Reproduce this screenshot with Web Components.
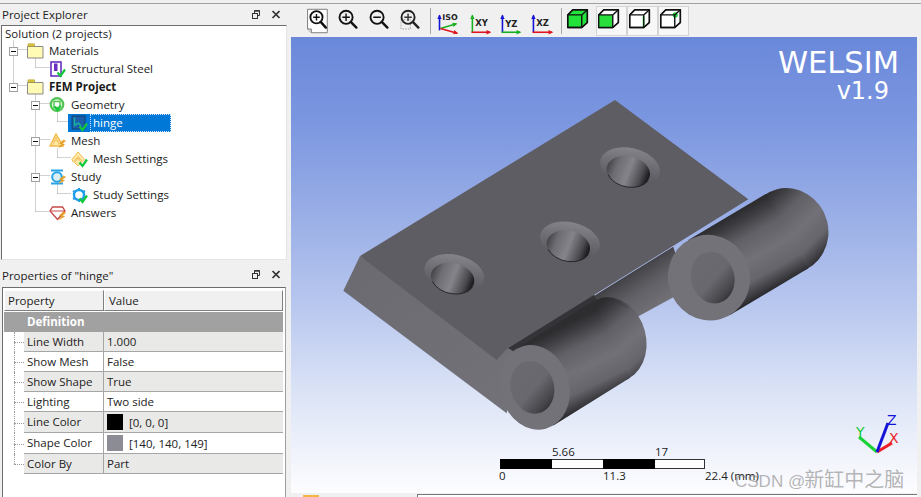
<!DOCTYPE html>
<html><head><meta charset="utf-8"><title>WELSIM</title>
<style>html,body{margin:0;padding:0;background:#f0f0f0;overflow:hidden}body{width:921px;height:497px;font:11.5px "Open Sans",sans-serif;color:#1a1a1a}</style>
</head><body>
<wel-app>
  <div slot="left" style="display:contents">
    <dock-panel title="Project Explorer" tall="1">
      <tree-view>
        <tree-row level="0" label="Solution (2 projects)"></tree-row>
        <tree-row level="1" exp="1" icon="folder" label="Materials"></tree-row>
        <tree-row level="2" icon="steel" label="Structural Steel"></tree-row>
        <tree-row level="1" exp="1" icon="folder" label="FEM Project" bold="1"></tree-row>
        <tree-row level="2" exp="1" icon="geometry" label="Geometry"></tree-row>
        <tree-row level="3" icon="hinge" label="hinge" selected="1"></tree-row>
        <tree-row level="2" exp="1" icon="mesh" label="Mesh"></tree-row>
        <tree-row level="3" icon="meshset" label="Mesh Settings"></tree-row>
        <tree-row level="2" exp="1" icon="study" label="Study"></tree-row>
        <tree-row level="3" icon="studyset" label="Study Settings"></tree-row>
        <tree-row level="2" icon="answers" label="Answers"></tree-row>
      </tree-view>
    </dock-panel>
    <dock-panel title="Properties of &quot;hinge&quot;">
      <prop-table>
        <prop-row name="Line Width" value="1.000" alt="1" h="20"></prop-row>
        <prop-row name="Show Mesh" value="False" h="20"></prop-row>
        <prop-row name="Show Shape" value="True" alt="1" h="20"></prop-row>
        <prop-row name="Lighting" value="Two side" h="20"></prop-row>
        <prop-row name="Line Color" value="[0, 0, 0]" swatch="#000" alt="1" h="21"></prop-row>
        <prop-row name="Shape Color" value="[140, 140, 149]" swatch="#8c8c95" h="21"></prop-row>
        <prop-row name="Color By" value="Part" alt="1" h="20" last="1"></prop-row>
      </prop-table>
    </dock-panel>
  </div>
  <div slot="right" style="display:contents">
    <tool-bar>
      <tool-btn icon="fit"></tool-btn><tool-btn icon="zin"></tool-btn><tool-btn icon="zout"></tool-btn><tool-btn icon="zwin"></tool-btn>
      <tool-sep></tool-sep>
      <tool-btn icon="iso"></tool-btn><tool-btn icon="xy"></tool-btn><tool-btn icon="yz"></tool-btn><tool-btn icon="xz"></tool-btn>
      <tool-sep></tool-sep>
      <tool-btn icon="solid"></tool-btn><tool-btn icon="face" on="1"></tool-btn><tool-btn icon="edge" on="1"></tool-btn><tool-btn icon="vertex" on="1"></tool-btn>
    </tool-bar>
    <view-port>
      <hinge-model></hinge-model>
      <brand-mark></brand-mark>
      <scale-bar></scale-bar>
      <axis-triad></axis-triad>
      <water-mark></water-mark>
    </view-port>
    <tab-strip></tab-strip>
  </div>
</wel-app>
<script>
const def=(name,render)=>customElements.define(name,class extends HTMLElement{
  connectedCallback(){ if(this.shadowRoot) return; const r=this.attachShadow({mode:'open'}); r.innerHTML=render(this); }
});
const A=(e,n)=>e.getAttribute(n)||'';

def('wel-app',()=>`<style>
:host{display:grid;grid-template-columns:291px 626px 4px;width:921px;height:497px;box-sizing:border-box;padding-top:3px;overflow:hidden}
.l,.r{display:flex;flex-direction:column;border-top:1px solid #a0a0a0;height:493px;min-height:0}
.e{border-top:1px solid #a0a0a0}
</style><div class="l"><slot name="left"></slot></div><div class="r"><slot name="right"></slot></div><div class="e"></div>`);

def('dock-panel',e=>{const tall=A(e,'tall');return `<style>
:host{display:flex;flex-direction:column;flex:${tall?'0 0 256px':'1 1 0'};min-height:0}
.t{display:flex;align-items:center;height:${tall?21:27}px;padding:${tall?'0':'3px 0 0'};box-sizing:border-box;padding-left:2px;color:#222}
.t span{flex:1}
svg{display:block;margin-right:11px}
.b{position:relative;flex:1;margin-left:${tall?1:2}px;margin-right:${tall?4:5}px;background:#fff;border:1px solid #e4e4e4;border-left:1px solid #6d6d6d;border-top:1px solid #6d6d6d;min-height:0;${tall?'':'border-right:1px solid #a0a0a0;border-bottom:0;'}}
</style><div class="t"><span>${A(e,'title').replace(/"/g,'&quot;')}</span>
<svg width="30" height="12" viewBox="0 0 30 12"><g fill="none" stroke="#333"><rect x="2.5" y="4.5" width="5" height="5"/><path d="M4.5 4V1.5h5v5H8"/><path d="M4.5 2h5" stroke-width="1.4"/></g><path d="M22.5 2l7 7M29.5 2l-7 7" stroke="#333" stroke-width="1.7"/></svg></div>
<div class="b"><slot></slot></div>`});

def('tree-view',()=>{
 const o=(x,y)=>[x-2,y-26];
 const L=(a,b,c,d)=>{const p=o(a,b),q=o(c,d);return `M${p[0]+.5} ${p[1]+.5}L${q[0]+.5} ${q[1]+.5}`};
 const d=[L(13,42,13,87),L(18,51,27,51),L(18,87,27,87),L(35,60,35,69),L(35,69,50,69),L(35,96,35,213),L(40,105,49,105),L(40,141,49,141),L(40,177,49,177),L(35,213,49,213),L(57,114,57,123),L(57,123,68,123),L(57,150,57,159),L(57,159,70,159),L(57,186,57,195),L(57,195,70,195)].join('');
 return `<style>:host{display:block;position:relative;height:100%}
svg{position:absolute;left:0;top:0;pointer-events:none}
.c{position:relative;margin-top:-2px}</style>
<svg width="280" height="230"><path d="${d}" fill="none" stroke="#a3a3a3" stroke-dasharray="1 1"/></svg><div class="c"><slot></slot></div>`});

const chk=`<path d="M8.500 11.500l3 3.500 4.500-6.500" fill="none" stroke="#12c83a" stroke-width="2.200"/>`;
const bolt=`<path d="M14.500 7l-4 3.500 2.500.5-3 3.500 5.500-3-2.500-.8 3.500-2.700z" fill="#eda52a" stroke="#d98f10" stroke-width=".5"/>`;
const icons={
 folder:`<path d="M.5 3.500h15.500v11.500H.5z" fill="#fffbb4" stroke="#8a8a8a"/><path d="M1 .8h6.500v2.400H1z" fill="#e0c93c" stroke="#a99b2b" stroke-width=".6"/>`,
 steel:`<rect x="2" y="1" width="10" height="14" fill="#fff" stroke="#6a2fc4" stroke-width="1.600"/><rect x="5" y="2.500" width="3.500" height="7.500" fill="#6a2fc4"/>${chk}`,
 geometry:`<circle cx="8" cy="7.500" r="6.300" fill="#dff5df" stroke="#52c452" stroke-width="2.200"/><rect x="5" y="4.500" width="6" height="6" fill="#fff" stroke="#52c452" stroke-width="1.400"/><path d="M5.500 9.500l3 3.500 3-4.500" fill="none" stroke="#12c83a" stroke-width="2"/>`,
 hinge:`<rect x="1" y="1" width="13" height="13" fill="#1c5ea8" stroke="#12406f"/><path d="M3.500 2.500v8l4-2.500 2.500 3" fill="none" stroke="#1ab0a0" stroke-width="1.500"/>${chk}`,
 mesh:`<path d="M7 1L14 13H1z" fill="#fde9a8" stroke="#f1b94c" stroke-width="1.400"/><path d="M4.500 8h6M7 4l-3 8M7 4l3 8" stroke="#f1b94c" fill="none" stroke-width=".8"/>${bolt}`,
 meshset:`<path d="M7 1l6.500 7.500L11.500 11 7 5.500 2.500 11 .8 8.500z" fill="#fde9a8" stroke="#f1b94c" stroke-width="1"/><path d="M7 7l3.500 4.500L7 15 3.500 11.500z" fill="#fde9a8" stroke="#f1b94c" stroke-width="1"/>${chk}`,
 study:`<path d="M2 1.500h12M2 14.500h12" stroke="#2aa4e8" stroke-width="1.800"/><circle cx="8" cy="8" r="4.800" fill="#d9f0fb" stroke="#2aa4e8" stroke-width="2"/>${bolt}`,
 studyset:`<circle cx="8" cy="8" r="5" fill="#fff" stroke="#1f9de6" stroke-width="2.400"/><path d="M8 1v2M8 13v2M2 4l2 1M14 4l-2 1M2 12l2-1M14 12l-2-1" stroke="#1f9de6" stroke-width="2"/>${chk}`,
 answers:`<path d="M3.500 2h10L16 6l-7.500 8.500L1 6z" fill="#fff" stroke="#c9484a" stroke-width="1.400"/><path d="M1.500 6h14" stroke="#c9484a"/>${bolt}`
};
def('tree-row',e=>{
 const lv=+A(e,'level'),sel=A(e,'selected'),bold=A(e,'bold'),label=A(e,'label');
 if(lv===0) return `<style>:host{display:block;height:18px;line-height:20px;padding-left:3px;white-space:nowrap}</style>${label}`;
 const ic=`<svg class="i" width="17" height="17" viewBox="0 0 17 17">${icons[A(e,'icon')]}</svg>`;
 const body=sel?`<span class="sel">${ic}<span class="x">${label}</span></span>`:`${ic}<span class="x">${label}</span>`;
 return `<style>
 :host{display:flex;align-items:center;height:18px;padding-left:${(lv-1)*22+7}px;white-space:nowrap;position:relative}
 .e{flex:0 0 9px;width:9px;height:9px;box-sizing:border-box;border:1px solid #a0a0a0;margin-right:9px;position:relative;background:#fff;visibility:${A(e,'exp')?'visible':'hidden'}}
 .e::after{content:"";position:absolute;left:1px;top:3px;width:5px;height:1px;background:#111}
 .i{flex:0 0 17px;display:block;margin-right:5px}
 .x{font-weight:${bold?700:400};line-height:18px;height:18px}
 .sel{display:flex;align-items:center;width:103px;height:18px;box-sizing:border-box;margin-left:-3px;padding-left:3px;background:#0078d7;color:#fff}
 .sel .i{margin-right:2px}
 .sel .x{flex:1;box-sizing:border-box;line-height:16px;border:1px dotted #cfe6fa;padding-left:2px}
 </style><span class="e"></span>${body}`});

def('prop-table',()=>`<style>
:host{display:block;padding:2px 0 0 1px;width:279px;color:#222}
.h{display:grid;grid-template-columns:100px 179px;height:20px}
.h div{background:#f0f0f0;box-sizing:border-box;border:1px solid;border-color:#fff #7f7f7f #7f7f7f #fff;line-height:19px;padding-left:3px}
.h div+div{padding-left:4px}
.d{margin-top:2px;height:20px;background:#a1a1a1;color:#fff;font-weight:700;line-height:20px;padding-left:23px}
</style><div class="h"><div>Property</div><div>Value</div></div><div class="d">Definition</div><slot></slot>`);

def('prop-row',e=>{const h=+A(e,'h'),sw=A(e,'swatch');return `<style>
:host{display:flex;height:${h}px;white-space:nowrap}
.g{flex:0 0 20px;position:relative}
.g::before{content:"";position:absolute;left:10px;top:0;${A(e,'last')?'height:50%':'bottom:0'};border-left:1px dotted #999}
.g::after{content:"";position:absolute;left:10px;right:0;top:50%;border-top:1px dotted #999}
.n,.v{box-sizing:border-box;border-bottom:1px solid #a6a6a6;background:${A(e,'alt')?'#e9e9e7':'#fff'}}
.n{flex:0 0 80px;padding-left:3px;border-right:1px solid #a6a6a6;line-height:${h-1}px}
.v{flex:0 0 179px;padding-left:3px;display:flex;align-items:center}
.s{width:16px;height:16px;background:${sw};margin-right:6px}
</style><div class="g"></div><div class="n">${A(e,'name')}</div><div class="v">${sw?'<span class="s"></span>':''}${A(e,'value')}</div>`});

def('tool-bar',()=>`<style>:host{display:flex;align-items:center;height:33px;flex:none;padding-left:12px;background:#f0f0f0;box-sizing:border-box}</style>
<slot></slot>`);
def('tool-sep',()=>`<style>:host{display:block;flex:0 0 1px;height:26px;background:#a8a8a8;margin:0 3px 0 3px}</style>`);
const mag=(extra,c='#111')=>`<circle cx="13" cy="12" r="7" fill="none" stroke="${c}" stroke-width="2"/><path d="M18 17l6 6" stroke="${c}" stroke-width="2.600" stroke-linecap="round"/>${extra}`;
const ar=(x1,y1,x2,y2,c)=>{const a=Math.atan2(y2-y1,x2-x1),s=4.500,f=(t)=>`${x2+s*Math.cos(a+t)} ${y2+s*Math.sin(a+t)}`;return `<path d="M${x1} ${y1}L${x2} ${y2}" stroke="${c}" stroke-width="1.700"/><path d="M${x2+Math.cos(a)} ${y2+Math.sin(a)}L${f(2.6)}L${f(-2.6)}z" fill="${c}"/>`};
const lbl=(t,x,y,s=9)=>`<text x="${x}" y="${y}" font-family="DejaVu Sans" font-weight="700" font-size="${s}" fill="#222">${t}</text>`;
const R='#e01520',G='#18b020',B='#1414d8';
const cube=(extra,front='none')=>`<path d="M3 9.500L8.500 4H24v13.500L18 23H3z" fill="#fff" stroke="#111" stroke-width="1.500" stroke-linejoin="round"/>${front!=='none'?`<rect x="3" y="9.500" width="15" height="13.500" fill="${front}"/>`:''}${extra}<path d="M3 9.500h15V23M18 9.500L24 4" fill="none" stroke="#111" stroke-width="1.500"/><path d="M3 9.500L8.500 4H24v13.500L18 23H3z" fill="none" stroke="#111" stroke-width="1.500" stroke-linejoin="round"/>`;
const tool={
 fit:`<path d="M5 3.500h21v25h-17l-4-4z" fill="#fff" stroke="#777"/><path d="M5 24.500h4v4" fill="#ddd" stroke="#777"/><circle cx="14.500" cy="12" r="6.500" fill="none" stroke="#111" stroke-width="2"/><path d="M19 17l5.500 6" stroke="#111" stroke-width="2.600" stroke-linecap="round"/><path d="M14.500 8.500v7M11 12h7" stroke="#111" stroke-width="1.500"/>`,
 zin:mag(`<path d="M13 8v8M9 12h8" stroke="#111" stroke-width="1.500"/>`),
 zout:mag(`<path d="M9 12h8" stroke="#111" stroke-width="1.600"/>`),
 zwin:`<rect x="5.500" y="14.500" width="10" height="10" fill="none" stroke="#999" stroke-dasharray="1.500 1.500"/>`+mag(`<path d="M13 8v8M9 12h8" stroke="#333" stroke-width="1.500"/>`,'#222'),
 iso:ar(6,26,6,10,B)+ar(7,24,24,19,G)+ar(7,24,25,29,R)+lbl('ISO',9,15,8.500),
 xy:ar(8,28,8,10,G)+ar(7,28,27,28,R)+lbl('XY',11,21),
 yz:ar(7,28,7,10,B)+ar(6,28,26,28,G)+lbl('YZ',10,22),
 xz:ar(7,28,7,10,B)+ar(6,28,27,28,R)+lbl('XZ',10,21),
 solid:cube('').replace(/fill="#fff"/,'fill="#22e33a"'),
 face:cube('','#28dd3c'),
 edge:cube(`<path d="M16.800 11v12h2V11z" fill="#48e060"/>`),
 vertex:cube(`<circle cx="18.500" cy="9.500" r="2.800" fill="#22d840"/>`)
};
def('tool-btn',e=>`<style>:host{flex:0 0 31px;width:31px;height:30px;display:flex;align-items:center;justify-content:center;box-sizing:border-box;${A(e,'on')?'background:#f7f7f7;border:1px solid #d4d4d4;':''}}svg{display:block;margin-right:5px;flex:none}</style>
<svg width="28" height="30" viewBox="0 0 28 32">${tool[A(e,'icon')]}</svg>`);

def('view-port',()=>`<style>:host{display:block;position:relative;flex:none;height:456px;overflow:hidden;background:linear-gradient(#6a88da 0%,#7b96e0 18%,#98ade6 38%,#b7c6ee 58%,#dbe3f6 78%,#fdfdff 100%)}</style><slot></slot>`);

def('hinge-model',()=>{
 const rad=Math.PI/180;
 const pt=(cx,cy,rx,ry,th,t)=>{const x=rx*Math.cos(t),y=ry*Math.sin(t),c=Math.cos(th*rad),s=Math.sin(th*rad);return [cx+x*c-y*s,cy+x*s+y*c]};
 const hole=(cx,cy)=>{
  const a=pt(-5,15,66,46,13,150*rad),b=pt(-5,15,66,46,13,15*rad);
  return `<g transform="translate(${cx} ${cy})"><ellipse rx="91" ry="56" transform="rotate(13)" fill="url(#cone)"/><ellipse cx="-5" cy="15" rx="66" ry="46" transform="rotate(13 -5 15)" fill="url(#bore)"/><path d="M${a[0]} ${a[1]}A66 46 13 0 0 ${b[0]} ${b[1]}" fill="none" stroke="#1a1a1d" stroke-width="2.500"/></g>`};
 const tube=(id,nx,ny,fx,fy,rx,ry,hx,hy,hrx,hry)=>{
  const th=-15,dx=fx-nx,dy=fy-ny,c=Math.cos(-th*rad),s=Math.sin(-th*rad);
  const lx=dx*c-dy*s,ly=dx*s+dy*c;
  const t0=Math.atan2(-ry*lx,rx*ly);
  let p=pt(nx,ny,rx,ry,th,t0),q=pt(nx,ny,rx,ry,th,t0+Math.PI);
  if(p[1]>q[1]){const w=p;p=q;q=w}
  return `<linearGradient id="${id}" gradientUnits="userSpaceOnUse" x1="${p[0]}" y1="${p[1]}" x2="${q[0]}" y2="${q[1]}"><stop offset="0" stop-color="#2d2d30"/><stop offset=".1" stop-color="#3c3c40"/><stop offset=".3" stop-color="#616066"/><stop offset=".55" stop-color="#727177"/><stop offset=".78" stop-color="#66656b"/><stop offset=".93" stop-color="#3c3b40"/><stop offset="1" stop-color="#252528"/></linearGradient>
  <ellipse cx="${fx}" cy="${fy}" rx="${rx}" ry="${ry}" transform="rotate(${th} ${fx} ${fy})" fill="url(#${id})"/>
  <path d="M${p[0]} ${p[1]}L${p[0]+dx} ${p[1]+dy}L${q[0]+dx} ${q[1]+dy}L${q[0]} ${q[1]}z" fill="url(#${id})"/>
  <ellipse cx="${nx}" cy="${ny}" rx="${rx}" ry="${ry}" transform="rotate(${th} ${nx} ${ny})" fill="#737279"/>
  <ellipse cx="${hx}" cy="${hy}" rx="${hrx}" ry="${hry}" transform="rotate(${th} ${hx} ${hy})" fill="url(#tubehole)"/>`};
 return `<style>:host{position:absolute;left:49px;top:63px;display:block;width:500px;height:350px}svg{display:block}</style>
<svg width="500" height="350" viewBox="0 0 1500 1050">
<defs>
<linearGradient id="cone" x1="0" y1="0" x2=".15" y2="1"><stop offset="0" stop-color="#88878d"/><stop offset=".5" stop-color="#6e6d73"/><stop offset="1" stop-color="#58575d"/></linearGradient>
<linearGradient id="bore" x1="0" y1="0" x2="1" y2=".1"><stop offset="0" stop-color="#3a3a3e"/><stop offset=".25" stop-color="#6d6c72"/><stop offset=".55" stop-color="#85848a"/><stop offset=".85" stop-color="#4c4b50"/><stop offset="1" stop-color="#1f1f22"/></linearGradient>
<linearGradient id="tubehole" x1=".2" y1="0" x2=".75" y2="1"><stop offset="0" stop-color="#6b6a70"/><stop offset=".55" stop-color="#69686e"/><stop offset=".85" stop-color="#47464b"/><stop offset="1" stop-color="#2c2c30"/></linearGradient>
<linearGradient id="mid" gradientUnits="userSpaceOnUse" x1="840" y1="540" x2="920" y2="660"><stop offset="0" stop-color="#434347"/><stop offset=".45" stop-color="#626167"/><stop offset="1" stop-color="#757479"/></linearGradient>
<linearGradient id="front" x1="0" y1="0" x2="1" y2="1"><stop offset="0" stop-color="#6b6a70"/><stop offset="1" stop-color="#737278"/></linearGradient>
</defs>
<path d="M690 632L1000 440L1040 570L890 652z" fill="url(#mid)"/>
<path d="M490 745L760 580L800 660L540 810z" fill="#343438"/>
<path d="M60 468L10 572L500 940L530 760z" fill="url(#front)"/>
<path d="M825 0L1225 298L500 747L470 780L60 468z" fill="#5e5d63"/>
${hole(870,200)}${hole(690,423)}${hole(343,520)}
${tube('t1',584,862,814,719,104,128.500,577,862,65,80)}
${tube('t2',1107,533,1342,393,123,129,1118,533,65,78)}
<path d="M770 592Q815 590 860 622" fill="none" stroke="#333" stroke-dasharray="3 2" stroke-width="1.500"/>
</svg>`});

def('brand-mark',()=>`<style>:host{position:absolute;right:18px;top:9px;display:flex;flex-direction:column;align-items:flex-end;color:#fff;font-family:"DejaVu Sans",sans-serif;line-height:1}
.a{font-size:30.500px;line-height:33px}.b{font-size:24px;line-height:25px;margin-right:10px}</style><div class="a">WELSIM</div><div class="b">v1.9</div>`);

def('scale-bar',()=>`<style>:host{position:absolute;left:209px;top:407px;display:grid;grid-template-columns:52px 51px 52px 50px auto;grid-template-rows:15px 10px 16px;line-height:15px;white-space:nowrap;color:#222}
.b{border:1px solid #333;border-width:1px 0;background:#fff}.k{background:#000;border-color:#000}.e{border-right:1px solid #333}
.s{grid-row:3;line-height:14px}
</style>
<span></span><span>5.66</span><span></span><span>17</span><span></span>
<div class="b k"></div><div class="b"></div><div class="b k"></div><div class="b e"></div><span></span>
<span class="s" style="margin-left:-1px">0</span><span class="s"></span><span class="s">11.3</span><span class="s"></span><span class="s">22.4 (mm)</span>`);

def('axis-triad',()=>`<style>:host{position:absolute;left:560px;top:380px;display:block;width:50px;height:50px}svg{display:block;overflow:visible}text{font:14px "DejaVu Sans",sans-serif}</style>
<svg width="50" height="50"><path d="M26 35L8 20" stroke="#18d238" stroke-width="3"/><path d="M26 35L41 26" stroke="#ee1c24" stroke-width="3"/><path d="M26 35L37 6" stroke="#1414d8" stroke-width="3"/>
<text x="5" y="20" fill="#18c838">Y</text><text x="36" y="8" fill="#1414d8">Z</text><text x="38" y="26" fill="#ee1c24">X</text></svg>`);

def('water-mark',()=>`<style>:host{position:absolute;left:444px;top:427px;display:block;font:17px "Liberation Sans","Noto Sans CJK SC",sans-serif;color:rgba(120,120,120,.55);white-space:nowrap}span{font-size:20px;margin-left:-1px}</style>CSDN @<span>新缸中之脑</span>`);

def('tab-strip',()=>`<style>:host{display:flex;flex:none;height:4px;background:#f0f0f0;overflow:hidden}
.m{margin:2px 0 0 12px;width:16px;height:2px;background:#f4b63f}.l{margin-left:98px;flex:1;border-top:1px solid #777;margin-top:1px;background:#fff;border-left:1px solid #777}</style><div class="m"></div><div class="l"></div>`);
</script>
</body></html>
